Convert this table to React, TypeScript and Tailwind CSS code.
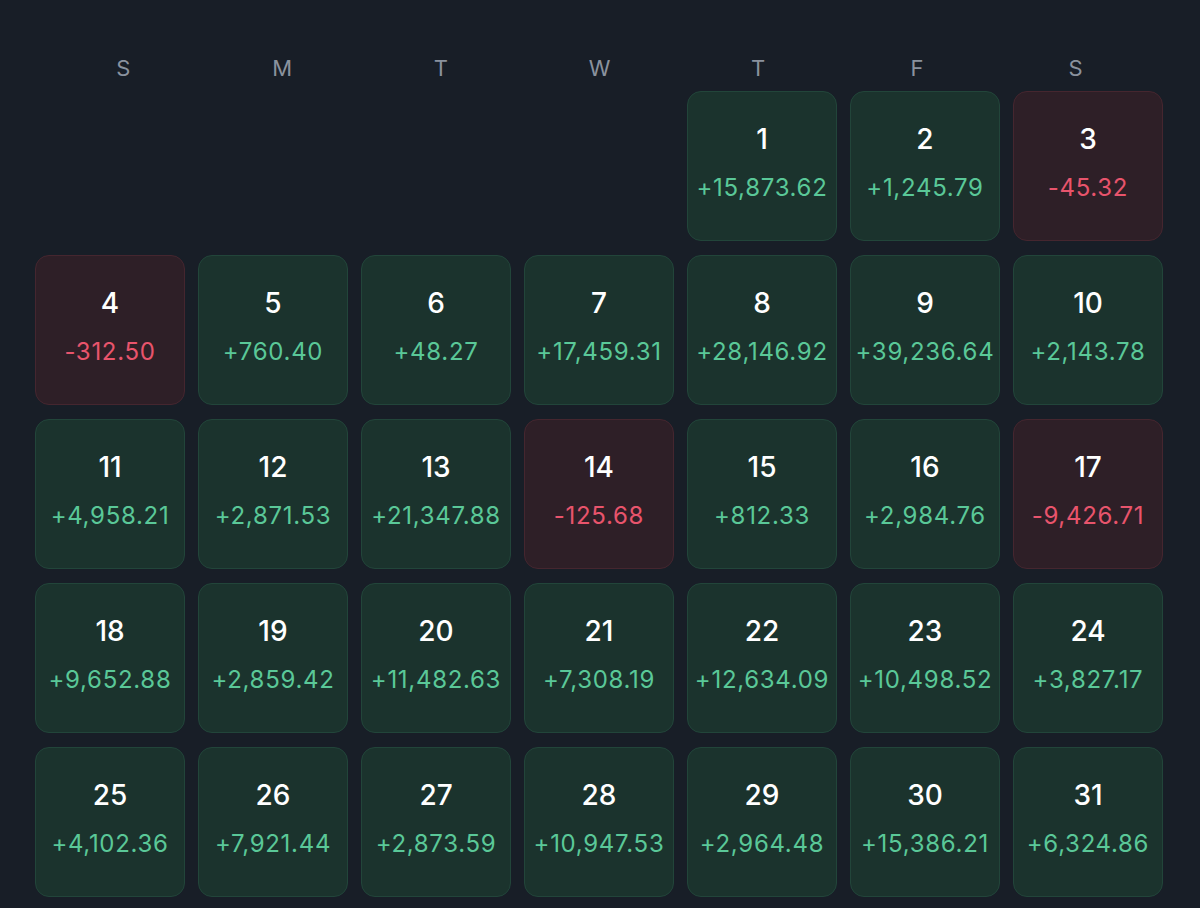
import React from "react";

type Day = { d: number; v: string; neg?: boolean } | null;

const days: Day[] = [
  null, null, null, null,
  { d: 1, v: "+15,873.62" },
  { d: 2, v: "+1,245.79" },
  { d: 3, v: "-45.32", neg: true },
  { d: 4, v: "-312.50", neg: true },
  { d: 5, v: "+760.40" },
  { d: 6, v: "+48.27" },
  { d: 7, v: "+17,459.31" },
  { d: 8, v: "+28,146.92" },
  { d: 9, v: "+39,236.64" },
  { d: 10, v: "+2,143.78" },
  { d: 11, v: "+4,958.21" },
  { d: 12, v: "+2,871.53" },
  { d: 13, v: "+21,347.88" },
  { d: 14, v: "-125.68", neg: true },
  { d: 15, v: "+812.33" },
  { d: 16, v: "+2,984.76" },
  { d: 17, v: "-9,426.71", neg: true },
  { d: 18, v: "+9,652.88" },
  { d: 19, v: "+2,859.42" },
  { d: 20, v: "+11,482.63" },
  { d: 21, v: "+7,308.19" },
  { d: 22, v: "+12,634.09" },
  { d: 23, v: "+10,498.52" },
  { d: 24, v: "+3,827.17" },
  { d: 25, v: "+4,102.36" },
  { d: 26, v: "+7,921.44" },
  { d: 27, v: "+2,873.59" },
  { d: 28, v: "+10,947.53" },
  { d: 29, v: "+2,964.48" },
  { d: 30, v: "+15,386.21" },
  { d: 31, v: "+6,324.86" },
];

const heads = ["S", "M", "T", "W", "T", "F", "S"];

export default function App() {
  return (
    <div
      className="w-[1200px] h-[908px] bg-[#181e27] overflow-hidden"
      style={{ fontFamily: "Inter, 'Noto Sans', sans-serif" }}
    >
      <div className="grid grid-cols-7 pl-[44px] pr-[45px] pt-[53px] h-[90px]">
        {heads.map((h, i) => (
          <div key={i} className="text-center text-[22px] leading-[30px] text-[#8a929e]">
            {h}
          </div>
        ))}
      </div>
      <div className="grid grid-cols-[repeat(7,150px)] auto-rows-[150px] gap-x-[13px] gap-y-[14px] pl-[35px] pt-[1px]">
        {days.map((c, i) =>
          c ? (
            <div
              key={i}
              className={
                "flex flex-col items-center pt-[30px] rounded-[14px] border " +
                (c.neg
                  ? "bg-[#2e1f27] border-[#45262f]"
                  : "bg-[#1b332d] border-[#22453a]")
              }
            >
              <div className="text-[28px] leading-[34px] font-medium text-white">{c.d}</div>
              <div
                className={
                  "mt-[17px] text-[24px] leading-[30px] tracking-[0.7px] " +
                  (c.neg ? "text-[#e8546c]" : "text-[#5ac898]")
                }
              >
                {c.v}
              </div>
            </div>
          ) : (
            <div key={i} />
          )
        )}
      </div>
    </div>
  );
}
